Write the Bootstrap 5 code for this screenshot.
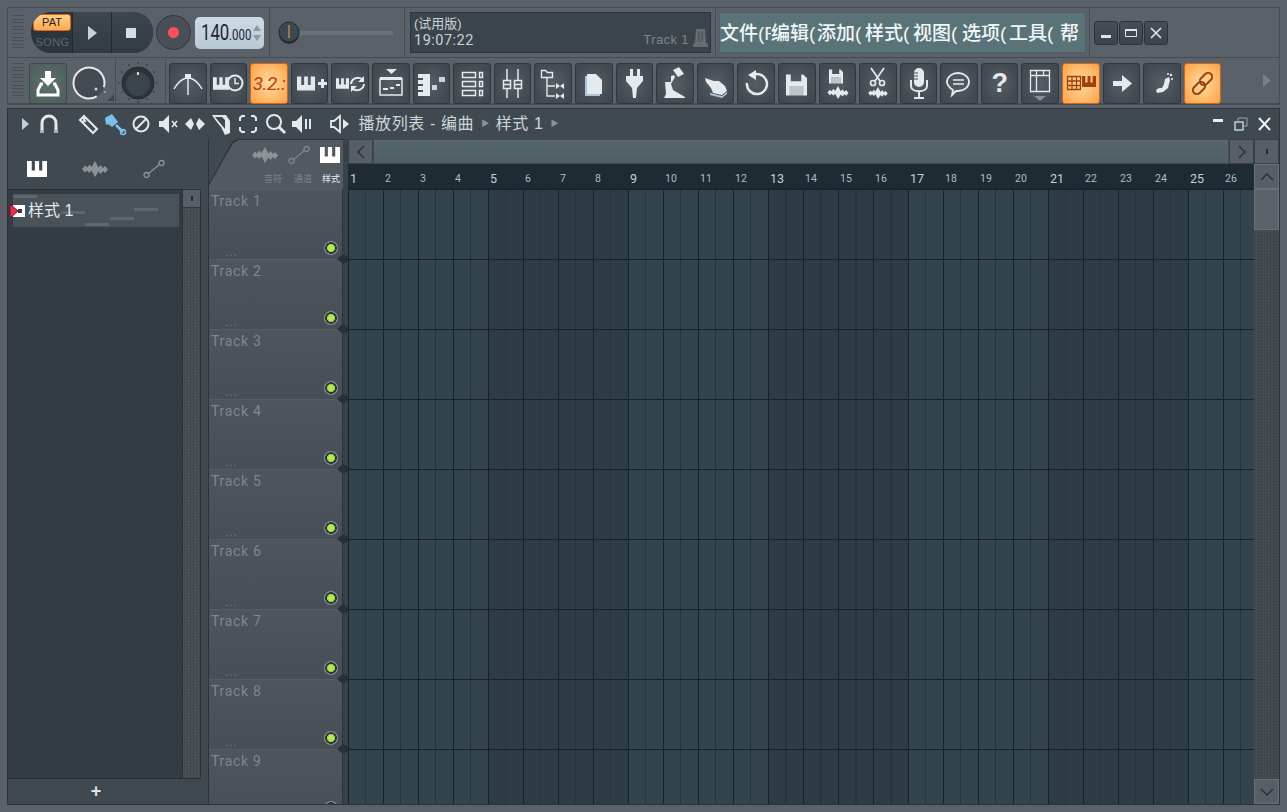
<!DOCTYPE html>
<html lang="zh">
<head>
<meta charset="UTF-8" />
<meta name="viewport" content="width=device-width, initial-scale=1" />
<title>播放列表 - 编曲</title>
<link href="https://cdn.jsdelivr.net/npm/bootstrap@5.3.3/dist/css/bootstrap.min.css" rel="stylesheet" />
<style>
  html, body { height: 100%; overflow: hidden; }
  body { background: #5a6169; font-family: "Liberation Sans", "Noto Sans CJK SC", sans-serif; color: #dfe6ea; }
  svg { display: block; flex: none; }
  .narrow { font-family: Roboto, "Liberation Sans", "Noto Sans CJK SC", sans-serif; }
  .app { width: 1287px; height: 812px; padding: 7px; }
  .bar-top { height: 51px; border: 1px solid #484e55; border-bottom-color: #454b52; }
  .bar-tools { height: 47px; border-left: 1px solid #484e55; border-right: 1px solid #484e55; border-bottom: 2px solid #454b52; }
  .sec { height: 100%; border-right: 1px solid #484e55; flex: none; }
  .sec-transport { width: 262px; padding-left: 4px; }
  .sec-slider { width: 135px; padding-left: 8px; }
  .sec-hint { width: 311px; padding-left: 5px; }
  .sec-menu { width: 374px; padding-left: 3px; }
  .sec-win { padding-left: 4px; gap: 1px; }
  .grip { width: 12px; height: 36px; flex: none; background: repeating-linear-gradient(180deg, #4a5057 0 1px, transparent 1px 3.6px); }
  .pill { width: 122px; height: 41px; margin-left: 7px; background: #2c353b; border-radius: 20px; overflow: hidden; }
  .pill-pat { width: 41px; padding: 2px 0 0 2px; }
  .pat { width: 38px; height: 17px; font-size: 11px; line-height: 15px; text-align: center; color: #2b2118; background: linear-gradient(#ffd08a, #ffa94f); border: 1px solid #d8641a; border-radius: 7px 3px 3px 3px; }
  .song { font-size: 11px; line-height: 23px; text-align: center; color: #5f676d; letter-spacing: .4px; }
  .pill-btn { height: 41px; background: linear-gradient(#3d464d, #323b41); border-left: 1px solid #232a2f; }
  .pill-play { width: 39px; }
  .pill-stop { width: 42px; padding-right: 3px; }
  .rec { width: 35px; height: 35px; margin-left: 3px; border-radius: 50%; background: #484f56; border: 1px solid #30363b; }
  .rec span { width: 11px; height: 11px; border-radius: 50%; background: #ff4f58; }
  .bpm { width: 69px; height: 32px; margin-left: 4px; border-radius: 5px; background: linear-gradient(#cddbe5, #b9c9d4); color: #1c2530; padding-left: 6px; }
  .bpm b { display: block; width: 28px; font-weight: 400; font-size: 22px; line-height: 32px; transform: scaleX(.76); transform-origin: left center; }
  .bpm i { display: block; width: 23px; font-style: normal; font-size: 14px; line-height: 32px; padding-top: 4px; transform: scaleX(.82); transform-origin: left center; }
  .bpm-arrows { margin-left: 1px; }
  .slide-track { width: 93px; height: 4px; background: #6b7178; }
  .hint { width: 301px; height: 41px; background: #3c444b; border: 1px solid #2e3439; padding: 2px 2px 0 3px; font-size: 13px; line-height: 17px; color: #c9d2d8; }
  .hint-time { font-size: 14.5px; letter-spacing: .5px; }
  .hint-track { font-size: 13px; color: #7d858b; letter-spacing: .4px; }
  .menu-box { width: 367px; height: 41px; background: #5a7378; border: 1px solid #4b5f64; font-size: 19px; font-weight: 500; line-height: 41px; color: #f0f7f7; white-space: nowrap; overflow: hidden; }
  .menu-box span { overflow: hidden; flex: none; display: block; }
  .mw-50 { width: 51px; } .mw-46 { width: 46px; } .mw-48 { width: 48px; } .mw-49 { width: 49px; } .mw-47 { width: 47px; } .mw-51 { width: 51px; } .mw-24 { width: 24px; }
  .win-btn { width: 24px; height: 24px; background: linear-gradient(#474e55, #3c434a); border: 1px solid #2c3237; border-radius: 3px; }
  .tools-row { gap: 3px; margin-left: 3px; }
  .tool-wrap { padding-top: 5px; }
  .tool { width: 37.6px; height: 41px; padding: 0; color: #e4eaee; background: radial-gradient(ellipse at center, #565d64 0, #454c53 65%, #3e454c 100%); border: 1px solid #31373c; border-radius: 3px; --bs-btn-hover-bg: #565d64; overflow: hidden; }
  .tool.on { background: radial-gradient(ellipse at center, #ffdca4 0, #ffbd70 55%, #ff9f3e 100%); border-color: #d0651c; color: #a23f0b; }
  .tool svg { margin: -1px 0 0 -1px; }
  .count { font-size: 19px; font-style: italic; color: #c8380c; width: 100%; line-height: 39px; letter-spacing: -.5px; white-space: nowrap; }
  .qmark { font-size: 27px; font-weight: 700; line-height: 39px; display: block; }
  .down-btn { width: 38px; height: 41px; margin-left: 5px; background: radial-gradient(#5b716d, #4d5d5b); border: 1px solid #3e4a49; border-radius: 3px; color: #fff; }
  .sep-v { width: 1px; height: 100%; background: #484e55; flex: none; }
  .pl { height: 697px; margin-top: 3px; border: 1px solid #2d343a; background: #414950; }
  .pl-title { height: 31px; padding-left: 5px; font-size: 16px; color: #cdd6dc; white-space: nowrap; letter-spacing: .6px; }
  .pl-icons { gap: 2.7px; margin-left: 15px; margin-right: 14px; }
  .pl-speaker { margin-right: 7px; }
  .crumb { font-size: 8px; color: #8a939a; margin: 0 6px 0 7px; }
  .pl-win { margin-right: 7px; }
  .pl-body { height: 665px; }
  .side { width: 200px; flex: none; }
  .side-tabs { height: 50px; padding: 10px 26px 0 2px; }
  .side-list { width: 193px; height: 590px; background: #333c43; border: 1px solid #293137; border-left: 0; }
  .side-items { width: 175px; padding: 4px 0 0 5px; }
  .clip { position: relative; width: 166px; height: 33px; background: #4a5259; font-size: 16px; line-height: 33px; padding-left: 15px; color: #e5ebee; }
  .clip i { position: absolute; height: 2.5px; background: #5f676e; }
  .clip span { position: relative; }
  .n1 { left: 0; top: 1px; width: 24px; } .n2 { left: 48px; top: 17px; width: 24px; } .n3 { left: 72px; top: 29px; width: 24px; } .n4 { left: 97px; top: 23px; width: 24px; } .n5 { left: 121px; top: 14px; width: 24px; }
  .clip-mark { position: absolute; left: -4px; top: 9px; }
  .hatch { width: 18px; flex: none; background: repeating-conic-gradient(#42484e 0 25%, #4d5359 0 50%) 0 0 / 3px 3px; border-left: 1px solid #293137; }
  .sq-btn { height: 18px; background: #575e65; border-bottom: 1px solid #30363b; }
  .add-row { height: 25px; font-size: 18px; font-weight: 700; line-height: 24px; }
  .tab-dim { color: #8b9298; }
  .col-tracks { width: 135px; flex: none; border-left: 1px solid #2b3238; }
  .tabs-edge { height: 50px; margin-left: -1px; padding: 1px 0 0 1px; background: #2b3238; clip-path: polygon(0 100%, 0 93%, 24px 6%, 30px 0, 100% 0, 100% 100%); }
  .tabs { height: 49px; background: #525960; clip-path: polygon(0 100%, 0 93%, 24px 6%, 30px 0, 100% 0, 100% 100%); }
  .tabs-icons { height: 26px; padding: 3px 4px 0 43px; gap: 10px; }
  .tabs-labels { font-size: 9px; padding: 7px 0 0 55px; color: #7d858b; line-height: 12px; }
  .tabs-labels span { width: 30px; flex: none; }
  .tabs-labels span:nth-child(2) { width: 28px; }
  .tabs-labels .cur { color: #e4eaee; }
  .tracks { position: relative; z-index: 1; height: 615px; clip-path: inset(0 -10px 0 0); border-right: 1px solid #2b3238; }
  .track { position: relative; height: 70px; background: linear-gradient(#4e555c, #474e55); border-top: 1px solid #555c63; padding: 2px 0 0 2px; font-size: 14px; line-height: 18px; letter-spacing: .7px; color: #7f878d; }
  .dots { position: absolute; left: 16px; top: 55px; line-height: 14px; font-size: 13px; color: #6c7379; }
  .led { position: absolute; left: 115px; top: 51px; width: 14px; height: 14px; border-radius: 50%; background: radial-gradient(circle closest-side, #b4ea58 0 35%, #86c62c 58%, #2e353a 62% 80%, #888f94 86%); }
  .notch { position: absolute; right: -6px; bottom: -5px; width: 11px; height: 10px; background: #283037; clip-path: polygon(0 50%, 55% 0, 100% 30%, 100% 70%, 55% 100%); z-index: 1; }
  .gutter { width: 5px; flex: none; background: #3a4249; }
  .col-main { width: 931px; flex: none; }
  .arrange-top { height: 25px; }
  .sc-btn { width: 25px; flex: none; background: #575e65; border: 1px solid #383f45; color: #2a3137; }
  .sc-track { flex: 1; background: linear-gradient(#56666c, #4f5f66); border: 1px solid #454c53; }
  .ruler { height: 24px; background: #1f2b33; color: #aebcc6; font-size: 10.5px; line-height: 30px; overflow: hidden; }
  .ruler span { width: 35px; flex: none; padding-left: 2px; }
  .ruler .big { font-size: 12.5px; color: #c3cfd7; }
  .ruler-row { width: 906px; flex: none; }
  .grid { width: 906px; flex: none; border-top: 1px solid #1c2830;
    background-image:
      repeating-linear-gradient(180deg, #17232b 0 1px, transparent 1px 70px),
      repeating-linear-gradient(90deg, #15222a 0 1px, transparent 1px 35px),
      repeating-linear-gradient(90deg, #26343d 0 1px, transparent 1px 17.5px),
      repeating-linear-gradient(90deg, #34444e 0 140px, #2d3c46 140px 280px); }
  .v-scroll { width: 25px; flex: none; background: repeating-conic-gradient(#3e4449 0 25%, #484e53 0 50%) 0 0 / 3px 3px; }
  .v-btn { height: 25px; background: #575e65; border: 1px solid #6a7076; color: #2a3137; }
  .v-thumb { height: 41px; background: #5b6269; border: 1px solid #6a7076; }
</style>
</head>
<body>
<svg width="0" height="0" class="position-absolute">
  <symbol id="piano" viewBox="0 0 19 15"><path fill="currentColor" fill-rule="evenodd" d="M0 0h19v15H0zM4.500 0h3v9h-3zM11.500 0h3v9h-3z"/></symbol>
  <symbol id="wave" viewBox="0 0 26 16"><path fill="currentColor" d="M0 8l3-3.500 2 2 2.500-3 2 2.500L13 0l3.500 6.500 2-2.500 2.500 3 2-2 3 3.500-3 3.500-2-2-2.500 3-2-2.500L13 16l-3.500-6.500-2 2.500L5 9.500l-2 2z"/></symbol>
  <symbol id="floppy" viewBox="0 0 22 22"><path fill="currentColor" fill-rule="evenodd" d="M0 0h18l4 4v18H0zM5 0v7h11V0zM4 12v10h14V12z"/><path fill="currentColor" opacity=".75" d="M4 12h14v10H4z"/></symbol>
</svg>

<div class="app d-flex flex-column">
  <div class="bar-top d-flex">
    <div class="sec sec-transport d-flex align-items-center">
      <div class="grip"></div>
      <div class="pill d-flex">
        <div class="pill-pat"><div class="pat">PAT</div><div class="song">SONG</div></div>
        <div class="pill-btn pill-play d-flex align-items-center justify-content-center"><svg width="10" height="14"><path fill="#c3d3df" d="M1 0l9 7-9 7z"/></svg></div>
        <div class="pill-btn pill-stop d-flex align-items-center justify-content-center"><svg width="10" height="10"><path fill="#d5dde2" d="M0 0h10v10H0z"/></svg></div>
      </div>
      <div class="rec d-flex align-items-center justify-content-center"><span></span></div>
      <div class="bpm d-flex align-items-center narrow">
        <b>140</b><i>.000</i>
        <svg class="bpm-arrows" width="8" height="18"><path fill="#8d9aa3" d="M4 1l4 6H0zM4 17l4-6H0z"/></svg>
      </div>
    </div>
    <div class="sec sec-slider d-flex align-items-center">
      <svg width="22" height="24" viewBox="0 0 22 24"><circle cx="11" cy="13" r="10" fill="#262c31"/><circle cx="11" cy="11" r="10" fill="#3f474e" stroke="#23292e"/><path stroke="#e9a868" d="M11 4v13"/></svg>
      <div class="slide-track"></div>
    </div>
    <div class="sec sec-hint d-flex align-items-center">
      <div class="hint d-flex justify-content-between">
        <div><div>(试用版)</div><div class="hint-time narrow">19:07:22</div></div>
        <div class="d-flex align-items-end hint-track pb-1">Track 1
          <svg class="ms-1" width="15" height="20" viewBox="0 0 15 20"><path fill="#656c72" d="M3 1h9l1 13 2 3v2H0v-2l2-3z"/><path stroke="#474e54" d="M6 3v11M9 3v11"/></svg>
        </div>
      </div>
    </div>
    <div class="sec sec-menu d-flex align-items-center">
      <div class="menu-box d-flex">
        <span class="mw-50">文件(F</span><span class="mw-46">编辑(</span><span class="mw-48">添加(</span><span class="mw-48">样式(</span><span class="mw-49">视图(</span><span class="mw-47">选项(</span><span class="mw-51">工具(</span><span class="mw-24">帮</span>
      </div>
    </div>
    <div class="d-flex align-items-center sec-win">
      <div class="win-btn d-flex align-items-center justify-content-center"><svg width="12" height="12"><path fill="#dfe6ea" d="M1 8h10v3H1z"/></svg></div>
      <div class="win-btn d-flex align-items-center justify-content-center"><svg width="12" height="12"><path fill="none" stroke="#dfe6ea" d="M.5 2.500h11v7H.5z"/><path fill="#dfe6ea" d="M0 2h12v2H0z"/></svg></div>
      <div class="win-btn d-flex align-items-center justify-content-center"><svg width="12" height="12"><path stroke="#dfe6ea" stroke-width="1.600" d="M1 1l10 10M11 1L1 11"/></svg></div>
    </div>
  </div>

  <div class="bar-tools d-flex">
    <div class="d-flex align-items-center ps-1">
      <div class="grip"></div>
    </div>
    <div class="tool-wrap"><div class="down-btn d-flex align-items-center justify-content-center">
      <svg width="24" height="26" viewBox="0 0 24 26"><path fill="#fff" d="M9 0h6v7h5l-8 8-8-8h5z"/><path fill="none" stroke="#fff" stroke-width="3" d="M7 13H5l-3 6v5h20v-5l-3-6h-2"/></svg>
    </div></div>
    <svg width="48" height="45" viewBox="0 0 48 45"><circle cx="22" cy="25" r="15.500" fill="#434a51" stroke="#e4e9ec" stroke-width="2" stroke-dasharray="85 12" transform="rotate(60 22 25)"/><circle cx="29" cy="31" r="1.500" fill="#c8d0d5"/><circle cx="38" cy="34" r="1" fill="#aab2b8"/><path fill="#3e454b" d="M40 43l7-7v7z"/></svg>
    <div class="sep-v"></div>
    <svg width="49" height="45" viewBox="0 0 49 45"><g fill="#3c4349"><circle cx="22" cy="5" r="1"/><circle cx="31" cy="7" r="1"/><circle cx="38" cy="14" r="1"/><circle cx="41" cy="25" r="1"/><circle cx="38" cy="34" r="1"/><circle cx="31" cy="41" r="1"/><circle cx="22" cy="44" r="1"/><circle cx="13" cy="41" r="1"/><circle cx="6" cy="34" r="1"/><circle cx="3" cy="25" r="1"/><circle cx="6" cy="14" r="1"/><circle cx="13" cy="7" r="1"/></g><circle cx="22" cy="25" r="16" fill="#2c343a" stroke="#23292e"/><circle cx="22" cy="26" r="12" fill="#3b444a"/><path stroke="#cfd6da" stroke-width="2" d="M22 14v3"/></svg>
    <div class="sep-v"></div>
    <div class="d-flex tools-row tool-wrap">
      <button class="btn tool"><svg width="38" height="41"><path fill="none" stroke="currentColor" stroke-width="1.500" d="M5 26Q10 17 17 15M33 26Q28 17 21 15"/><path stroke="currentColor" stroke-width="1.500" d="M19 14v18"/><path fill="currentColor" d="M16 11h6v5h-6z"/></svg></button>
      <button class="btn tool"><svg width="38" height="41"><use href="#piano" x="3" y="14" width="16" height="13"/><circle cx="25" cy="20" r="7.500" fill="none" stroke="currentColor" stroke-width="2"/><path fill="none" stroke="currentColor" stroke-width="1.500" d="M25 15v5.500h4"/></svg></button>
      <button class="btn tool on"><div class="count narrow">3.2.:</div></button>
      <button class="btn tool"><svg width="38" height="41"><use href="#piano" x="6" y="13" width="18" height="15"/><path fill="currentColor" d="M27 19h3v-3h3v3h3v3h-3v3h-3v-3h-3z"/></svg></button>
      <button class="btn tool"><svg width="38" height="41"><use href="#piano" x="5" y="15" width="13" height="11"/><path fill="none" stroke="currentColor" stroke-width="2" d="M20 21a7 7 0 0 1 11-5M33 21a7 7 0 0 1-11 5"/><path fill="currentColor" d="M33 13v6h-6zM20 29v-6h6z"/></svg></button>
      <button class="btn tool"><svg width="38" height="41"><path fill="currentColor" d="M14 6h11l-5.500 5z"/><path fill="none" stroke="currentColor" stroke-width="1.500" d="M8 16h22v16H8z"/><path fill="currentColor" d="M8 14h22v3H8zM11 25h5v2h-5zM18 24h4v2h-4zM24 21h4v2h-4z"/></svg></button>
      <button class="btn tool"><svg width="38" height="41"><path fill="currentColor" fill-rule="evenodd" d="M5 11h12v22H5zM5 15h5v2H5zM5 21h5v2H5zM5 27h5v2H5z"/><path fill="currentColor" d="M19 22h5v5h-5zM26 14h6v5h-6z" opacity=".85"/></svg></button>
      <button class="btn tool"><svg width="38" height="41"><g fill="none" stroke="currentColor" stroke-width="1.500"><path d="M9.500 9.500h13v5h-13zM9.500 18.500h13v5h-13zM9.500 27.500h13v5h-13zM26.500 9.500h3v5h-3zM26.500 18.500h3v5h-3zM26.500 27.500h3v5h-3z"/></g></svg></button>
      <button class="btn tool"><svg width="38" height="41"><g fill="none" stroke="currentColor" stroke-width="1.500"><path d="M13 6v11M13 25v10M24 6v11M24 25v10M9.500 17.500h7v8h-7zM20.500 17.500h7v8h-7z"/><path d="M9.500 21.500h7M20.500 21.500h7"/></g></svg></button>
      <button class="btn tool"><svg width="38" height="41"><path fill="none" stroke="currentColor" stroke-width="1.400" d="M7.500 7.500h4l2 2h5v5h-11zM13 15v18h8M13 23h8"/><path fill="currentColor" d="M22 20l4 3 4-3v6l-4-3-4 3zM22 30l4 3 4-3v6l-4-3-4 3z"/></svg></button>
      <button class="btn tool"><svg width="38" height="41"><path fill="#a9c4dc" d="M10 13h2v18h13v2H10z"/><path fill="currentColor" d="M12 11h9l6 6v14H12z"/></svg></button>
      <button class="btn tool"><svg width="38" height="41"><path fill="currentColor" d="M14 6h3v7h4V6h3v7h3v5l-6 7-1 10h-3l-1-10-6-7v-5h4z"/></svg></button>
      <button class="btn tool"><svg width="38" height="41"><path fill="currentColor" d="M17 7l6-3 5 7-6 3zM15 13l3-1 1 2-4 7 2 6 12 7v1H8l2-4-1-12h6z"/></svg></button>
      <button class="btn tool"><svg width="38" height="41"><path fill="currentColor" d="M8 15l9 3 5 0 6 5 2 5-5 4-9-2-2-5-5-6z"/><path fill="#a9c4dc" d="M13 30l12 3 5-4v2l-5 4-12-3z"/></svg></button>
      <button class="btn tool"><svg width="38" height="41"><path fill="none" stroke="currentColor" stroke-width="2.500" d="M14 13a10 10 0 1 1-4 7"/><path fill="currentColor" d="M19 7v10l-8-5z"/></svg></button>
      <button class="btn tool"><svg width="38" height="41"><use href="#floppy" x="8" y="11" width="21" height="22"/></svg></button>
      <button class="btn tool"><svg width="38" height="41"><use href="#floppy" x="10" y="6" width="14" height="15"/><use href="#wave" x="7" y="23" width="24" height="13"/></svg></button>
      <button class="btn tool"><svg width="38" height="41"><g fill="none" stroke="currentColor" stroke-width="1.700"><path d="M12 5l9 13M25 5l-9 13"/><circle cx="14" cy="20" r="2.500"/><circle cx="23" cy="20" r="2.500"/></g><use href="#wave" x="7" y="24" width="24" height="12"/></svg></button>
      <button class="btn tool"><svg width="38" height="41"><rect x="14" y="5" width="10" height="19" rx="5" fill="currentColor"/><path fill="none" stroke="currentColor" stroke-width="2" d="M11 17v6c0 7 16 7 16 0v-6M19 29v5M14 35h10"/><path stroke="#454c53" d="M14 10h4M14 13h4M14 16h4"/></svg></button>
      <button class="btn tool"><svg width="38" height="41"><path fill="none" stroke="currentColor" stroke-width="1.800" d="M18 10c6 0 11 4 11 9s-5 9-11 9l-2 0-4 4 1-5c-3-2-6-5-6-8 0-5 5-9 11-9z"/><path stroke="currentColor" stroke-width="1.500" d="M13 17h11M13 21h11"/></svg></button>
      <button class="btn tool"><span class="qmark">?</span></button>
      <button class="btn tool"><svg width="38" height="41"><path fill="none" stroke="currentColor" stroke-width="1.300" d="M9.500 7.500h19v21h-19zM9.500 12.500h19M15.500 7.500v21M22.500 7.500v5"/><path fill="#868d93" d="M13 33h12l-6 5z"/></svg></button>
      <button class="btn tool on"><svg width="38" height="41"><path fill="none" stroke="currentColor" stroke-width="1.300" d="M5.500 13.500h13v13h-13zM5.500 18h13M5.500 22.500h13M10 13.500v13M14.500 13.500v13"/><use href="#piano" x="20" y="10" width="14" height="17"/></svg></button>
      <button class="btn tool"><svg width="38" height="41"><path fill="currentColor" d="M10 18h9v-6l10 8.500L19 29v-6h-9z"/></svg></button>
      <button class="btn tool"><svg width="38" height="41"><path fill="currentColor" d="M22 16l4-2 1 3-2 8-5 4-6 1-1-3 3-2h3l2-4z"/><circle cx="28" cy="12" r="1.200" fill="currentColor"/><circle cx="29" cy="16" r="1" fill="currentColor"/><circle cx="25" cy="11" r="1" fill="currentColor"/></svg></button>
      <button class="btn tool on"><svg width="38" height="41"><g fill="none" stroke="currentColor" stroke-width="2"><rect x="18" y="9" width="8" height="14" rx="4" transform="rotate(45 22 16)"/><rect x="11" y="18" width="8" height="14" rx="4" transform="rotate(45 15 25)"/></g></svg></button>
    </div>
    <svg class="ms-auto me-2 mt-3" width="8" height="13"><path fill="#787f85" d="M0 0l8 6.500L0 13z"/></svg>
  </div>

  <div class="pl d-flex flex-column">
    <div class="pl-title d-flex align-items-center">
      <svg width="24" height="24"><path fill="#c6ced3" d="M9 6l7 6-7 6z"/></svg>
      <svg width="24" height="24"><path fill="none" stroke="#e3e9ec" stroke-width="3" d="M5 20V11a7 7 0 0 1 14 0v9"/><path fill="#8fb7d6" d="M3 18h4v3H3zM17 18h4v3h-4z"/></svg>
      <div class="d-flex pl-icons">
        <svg width="24" height="24"><path fill="none" stroke="#e3e9ec" stroke-width="2" d="M4 8l4-4 13 13-4 4zM7 5l2 4-4 1"/></svg>
        <svg width="24" height="24"><path fill="#7cc0ee" d="M2 6l7-4 6 8-6 5-4-3-2 1zM14 12l7 7-2 2-7-7z"/><circle cx="20" cy="20" r="2.500" fill="none" stroke="#7cc0ee" stroke-width="1.500"/></svg>
        <svg width="24" height="24"><circle cx="12" cy="12" r="7.500" fill="none" stroke="#e3e9ec" stroke-width="2"/><path stroke="#e3e9ec" stroke-width="2" d="M7 17L17 7"/></svg>
        <svg width="24" height="24"><path fill="#e3e9ec" d="M3 9h4l6-6v18l-6-6H3z"/><path stroke="#e3e9ec" stroke-width="1.500" d="M16 9l5 6M21 9l-5 6"/></svg>
        <svg width="24" height="24"><path fill="#e3e9ec" d="M2 12l6-6 3 6-3 6zM22 12l-6-6-3 6 3 6z"/></svg>
        <svg width="24" height="24"><path fill="#e3e9ec" fill-rule="evenodd" d="M3 3h14l4 6v12l-5 2-4-8-5-6zM6 5l10 12V8l-3-3z"/></svg>
        <svg width="24" height="24"><path fill="none" stroke="#e3e9ec" stroke-width="2" d="M4 9V6l2-2h3M15 4h3l2 2v3M20 15v3l-2 2h-3M9 20H6l-2-2v-3"/></svg>
        <svg width="24" height="24"><circle cx="11" cy="10" r="7" fill="none" stroke="#e3e9ec" stroke-width="2"/><path stroke="#e3e9ec" stroke-width="3" d="M16 15l6 6"/></svg>
        <svg width="24" height="24"><path fill="#e3e9ec" d="M2 9h4l6-6v18l-6-6H2zM15 7h2v10h-2zM19 7h2v10h-2z"/></svg>
      </div>
      <svg width="24" height="24" class="pl-speaker"><path fill="none" stroke="#e3e9ec" stroke-width="1.800" d="M3 9h3l6-5v16l-6-5H3z"/><path fill="#e3e9ec" d="M15 7l6 5-6 5z"/></svg>
      <span>播放列表 - 编曲</span><span class="crumb">▶</span><span>样式 1</span><span class="crumb">▶</span>
      <div class="ms-auto d-flex align-items-center gap-2 pl-win">
        <svg width="15" height="14"><path fill="#e8eef1" d="M2 2h10v3H2z"/></svg>
        <svg width="15" height="14"><path fill="none" stroke="#b9cfe0" stroke-width="1.500" d="M1 5h8v8H1z"/><path fill="none" stroke="#9aa4ab" d="M4 4V1h9v8h-3"/></svg>
        <svg width="15" height="14"><path stroke="#eef3f5" stroke-width="2" d="M2 1l11 12M13 1L2 13"/></svg>
      </div>
    </div>

    <div class="pl-body d-flex">
      <div class="side">
        <div class="side-tabs d-flex align-items-center justify-content-around">
          <svg width="20" height="16" class="text-white"><use href="#piano" width="20" height="16"/></svg>
          <svg width="26" height="16" class="tab-dim"><use href="#wave" width="26" height="16"/></svg>
          <svg width="22" height="20"><g fill="none" stroke="#8b9298" stroke-width="1.300"><circle cx="3.500" cy="16" r="2.500"/><circle cx="18.500" cy="4" r="2.500"/><path d="M5.500 14.500l11-9"/></g></svg>
        </div>
        <div class="side-list d-flex">
          <div class="side-items">
            <div class="clip">
              <i class="n1"></i><i class="n2"></i><i class="n3"></i><i class="n4"></i><i class="n5"></i>
              <svg class="clip-mark" width="16" height="16"><path fill="#fff" d="M4 2h12v12H4z"/><path fill="#333c43" d="M9 6h4v4H9z"/><path fill="#ee2d4e" stroke="#6b1426" d="M1 1l8 7-8 7z"/></svg>
              <span>样式 1</span>
            </div>
          </div>
          <div class="hatch"><div class="sq-btn d-flex align-items-center justify-content-center"><svg width="2" height="5"><path fill="#23292e" d="M0 0h2v5H0z"/></svg></div></div>
        </div>
        <div class="add-row text-center pe-4">+</div>
      </div>

      <div class="col-tracks">
        <div class="tabs-edge"><div class="tabs">
          <div class="tabs-icons d-flex align-items-center">
            <svg width="26" height="16" class="tab-dim"><use href="#wave" width="26" height="16"/></svg>
            <svg width="22" height="20"><g fill="none" stroke="#7e858b" stroke-width="1.300"><circle cx="3.500" cy="16" r="2.500"/><circle cx="18.500" cy="4" r="2.500"/><path d="M5.500 14.500l11-9"/></g></svg>
            <svg width="20" height="16" class="text-white"><use href="#piano" width="20" height="16"/></svg>
          </div>
          <div class="tabs-labels d-flex"><span>音符</span><span>通道</span><span class="cur">样式</span></div>
        </div></div>
        <div class="tracks" id="tracks"></div>
      </div>
      <div class="gutter"></div>

      <div class="col-main d-flex flex-column">
        <div class="arrange-top d-flex">
          <div class="sc-btn d-flex align-items-center justify-content-center"><svg width="10" height="14"><path fill="none" stroke="#2a3137" stroke-width="1.500" d="M8 1L2 7l6 6"/></svg></div>
          <div class="sc-track"></div>
          <div class="sc-btn d-flex align-items-center justify-content-center"><svg width="10" height="14"><path fill="none" stroke="#2a3137" stroke-width="1.500" d="M2 1l6 6-6 6"/></svg></div>
          <div class="sc-btn d-flex align-items-center justify-content-center"><svg width="2" height="5"><path fill="#23292e" d="M0 0h2v5H0z"/></svg></div>
        </div>
        <div class="d-flex flex-fill">
          <div class="d-flex flex-column">
            <div class="ruler ruler-row d-flex narrow" id="ruler"></div>
            <div class="grid flex-fill"></div>
          </div>
          <div class="v-scroll d-flex flex-column">
            <div class="v-btn d-flex align-items-center justify-content-center"><svg width="14" height="10"><path fill="none" stroke="#2a3137" stroke-width="1.500" d="M1 8l6-6 6 6"/></svg></div>
            <div class="v-thumb"></div>
            <div class="flex-fill"></div>
            <div class="v-btn d-flex align-items-center justify-content-center"><svg width="14" height="10"><path fill="none" stroke="#2a3137" stroke-width="1.500" d="M1 2l6 6 6-6"/></svg></div>
          </div>
        </div>
      </div>
    </div>
  </div>
</div>

<script>
  const ruler = document.getElementById("ruler");
  for (let i = 1; i <= 26; i++) {
    const s = document.createElement("span");
    s.textContent = i;
    if (i % 4 === 1) s.className = "big";
    ruler.appendChild(s);
  }

  const tracks = document.getElementById("tracks");
  for (let i = 1; i <= 9; i++) {
    const t = document.createElement("div");
    t.className = "track narrow";
    // the last track is cut by the window, its dots are below the edge
    const dots = i < 9 ? `<div class="dots">...</div>` : "";
    t.innerHTML = `Track ${i}${dots}<div class="led"></div><div class="notch"></div>`;
    tracks.appendChild(t);
  }
</script>
<script src="https://cdn.jsdelivr.net/npm/bootstrap@5.3.3/dist/js/bootstrap.bundle.min.js"></script>
</body>
</html>
